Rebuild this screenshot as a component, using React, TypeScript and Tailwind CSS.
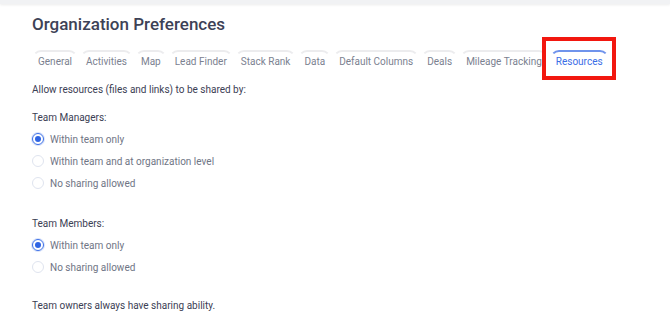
import * as React from "react";

const TABS = [
  "General",
  "Activities",
  "Map",
  "Lead Finder",
  "Stack Rank",
  "Data",
  "Default Columns",
  "Deals",
  "Mileage Tracking",
  "Resources",
];

function Radio({ label, checked = false }: { label: string; checked?: boolean }) {
  return (
    <label className="flex h-[22px] items-center gap-[6px]">
      <span
        className={`flex h-[12px] w-[12px] items-center justify-center rounded-full border ${
          checked ? "border-[#3b6fe6] shadow-[0_0_0_1px_#d9e3fb]" : "border-[#dfe4ef]"
        }`}
      >
        {checked && <span className="h-[6px] w-[6px] rounded-full bg-[#2f64e3]" />}
      </span>
      <span className="text-[10px] text-[#6f7585]">{label}</span>
    </label>
  );
}

export default function App() {
  return (
    <div className="relative h-[329px] w-[670px] overflow-hidden bg-white font-['Roboto',sans-serif] text-[#3b4054]">
      {/* top bar shadow */}
      <div className="h-[4px] bg-[#f1f2f4] shadow-[0_1px_3px_rgba(0,0,0,0.08)]" />

      <div className="px-[32px]">
        <h1 className="mt-[8px] text-[17px] font-medium leading-[24px] text-[#3d4256]">
          Organization Preferences
        </h1>

        <div className="mt-[14px] flex gap-[2px] whitespace-nowrap">
          {TABS.map((t) => {
            const active = t === "Resources";
            return (
              <div key={t} className="relative shrink-0">
                <div
                  className={`flex h-[20px] items-center rounded-t-[9px] border-t-2 border-x-2 border-x-transparent px-[4px] text-[10px] ${
                    active ? "border-t-[#6f93ec] text-[#3b6ee6]" : "border-t-[#ececee] text-[#7b8190]"
                  }`}
                >
                  {t}
                </div>
                {active && (
                  <div className="absolute left-[-8px] top-[-13px] h-[43px] w-[74px] border-[4px] border-[#f2170f]" />
                )}
              </div>
            );
          })}
        </div>

        <p className="mt-[12px] text-[10px] leading-[16px]">Allow resources (files and links) to be shared by:</p>

        <p className="mt-[12px] text-[10px] leading-[16px]">Team Managers:</p>
        <div className="mt-[2px] flex flex-col">
          <Radio label="Within team only" checked />
          <Radio label="Within team and at organization level" />
          <Radio label="No sharing allowed" />
        </div>

        <p className="mt-[22px] text-[10px] leading-[16px]">Team Members:</p>
        <div className="mt-[2px] flex flex-col">
          <Radio label="Within team only" checked />
          <Radio label="No sharing allowed" />
        </div>

        <p className="mt-[20px] text-[10px] leading-[16px]">Team owners always have sharing ability.</p>
      </div>
    </div>
  );
}
